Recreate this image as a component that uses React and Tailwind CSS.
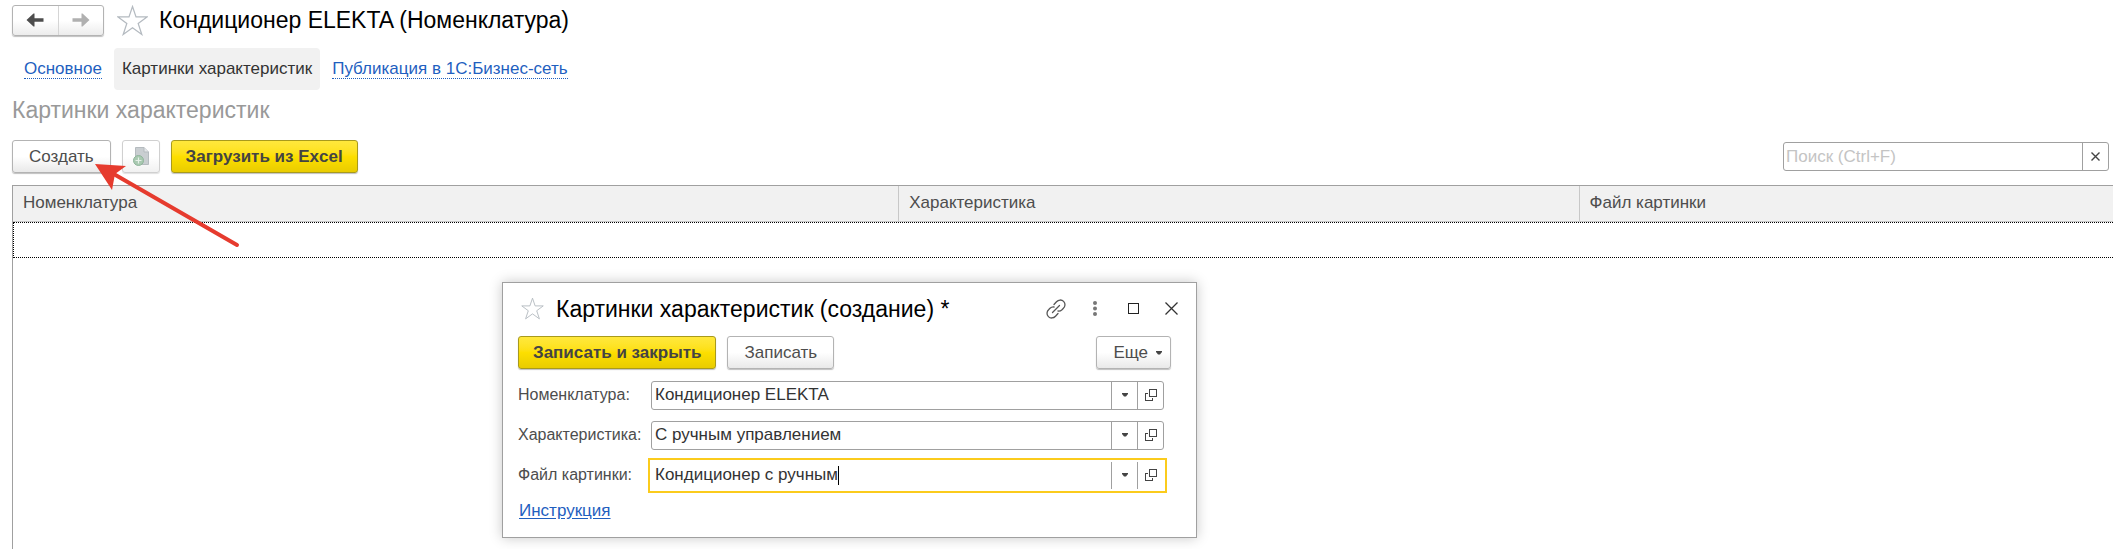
import React from 'react';

const yellowButton = 'h-[33px] rounded-[3px] border border-[#a89a1c] bg-gradient-to-b from-[#ffe83c] via-[#fddf00] to-[#e9cc00] px-[14px] text-[17px] leading-5 font-bold text-[#444] shadow-[0_1px_1px_rgba(0,0,0,0.25)]';
const grayButton = 'h-[33px] rounded-[3px] border border-[#b3b3b3] bg-gradient-to-b from-white from-50% to-[#e9e9e9] px-4 text-[17px] leading-5 text-[#4d4d4d] shadow-[0_1px_1px_rgba(0,0,0,0.25)]';
const headCell = 'border-b border-[#c8c8c8] px-[10px] pb-[2px] font-normal';

const tabs = [
    { label: 'Основное', active: false },
    { label: 'Картинки характеристик', active: true },
    { label: 'Публикация в 1С:Бизнес-сеть', active: false },
];

const fields = [
    { id: 'item', label: 'Номенклатура:', value: 'Кондиционер ELEKTA' },
    { id: 'feature', label: 'Характеристика:', value: 'С ручным управлением' },
    { id: 'file', label: 'Файл картинки:', value: 'Кондиционер с ручным', focused: true },
];

const Star = ({ size }) => (
    <svg width={size} height={size} viewBox="0 0 30 30" fill="none" stroke="#b4bac0" strokeWidth="1.2">
        <path d="M15 1.5 18.4 11.6H29L20.5 17.9 24 28.5 15 22 6 28.5 9.5 17.9 1 11.6H11.6Z" />
    </svg>
);

const Arrow = ({ color, flip }) => (
    <svg width="18" height="14" viewBox="0 0 18 14" fill={color} className={flip ? 'rotate-180' : ''}>
        <path d="M0.5 7 7.5 0.5H8.5V5.3H17.5V8.7H8.5V13.5H7.5Z" />
    </svg>
);

const Caret = () => (
    <svg width="6" height="4" viewBox="0 0 6 4" fill="#444">
        <path d="M0 0H6V1L4 3.5H2L0 1Z" />
    </svg>
);

const OpenIcon = () => (
    <svg width="12" height="12" viewBox="0 0 12 12" fill="none" stroke="#444" shapeRendering="crispEdges">
        <path d="M4.5 0.5H11.5V7.5H4.5ZM3 4.5H0.5V11.5H7.5V9" />
    </svg>
);

const Field = ({ field }) => (
    <div className="flex h-10 items-center">
        <label htmlFor={field.id} className="w-[133px] shrink-0 text-[16px] text-[#4d4d4d]">{field.label}</label>
        <div
            className={field.focused
                ? '-ml-[3px] mr-[14px] flex h-[35px] flex-1 border-2 border-[#fbcb1c] p-[2px]'
                : 'mr-[17px] flex h-[29px] flex-1 rounded-[3px] border border-[#a0a0a0]'}
        >
            <div className="relative flex min-w-0 flex-1">
                <input
                    id={field.id}
                    defaultValue={field.value}
                    className="min-w-0 flex-1 pl-[3px] text-[#333] caret-transparent outline-none"
                />
                {/* Text cursor after the value */}
                {field.focused && (
                    <span aria-hidden="true" className="pointer-events-none absolute inset-y-1 left-0 border-r border-black pl-[3px] text-transparent">
                        {field.value}
                    </span>
                )}
            </div>
            <button aria-label="Выбрать" className="flex w-[26px] items-center justify-center border-l border-[#a0a0a0]">
                <Caret />
            </button>
            <button aria-label="Открыть" className="flex w-[26px] items-center justify-center border-l border-[#a0a0a0]">
                <OpenIcon />
            </button>
        </div>
    </div>
);

const CreateDialog = () => (
    <section className="absolute top-[282px] left-[502px] w-[695px] border border-[#a0a0a0] bg-white px-[15px] pb-4 shadow-[0_0_12px_rgba(0,0,0,0.22)]">
        <header className="flex h-[53px] items-center pb-[2px]">
            <button aria-label="В избранное" className="ml-[3px]">
                <Star size={23} />
            </button>
            <h2 className="ml-3 flex-1 text-[23px] leading-7 text-black">Картинки характеристик (создание) *</h2>
            <div className="flex items-center pr-[3px]">
                <button aria-label="Ссылка" className="mr-[27px]">
                    <svg width="20" height="20" viewBox="0 0 20 20" fill="none" stroke="#555" strokeWidth="1.3" strokeLinecap="round">
                        <path d="M6.5 13.5 13.5 6.5" />
                        <path d="M8 5.5 10.5 2.8C12.5 0.7 15.5 0.3 17.6 2.4C19.7 4.5 19.3 7.5 17.2 9.5L16 10.7C14.8 11.8 13.5 12.3 12 12" />
                        <path d="M12 14.5 9.5 17.2C7.5 19.3 4.5 19.7 2.4 17.6C0.3 15.5 0.7 12.5 2.8 10.5L4 9.3C5.2 8.2 6.5 7.7 8 8" />
                    </svg>
                </button>
                <button aria-label="Меню" className="mr-[31px]">
                    <svg width="4" height="15" viewBox="0 0 4 15" fill="#777">
                        <circle cx="2" cy="2" r="2" />
                        <circle cx="2" cy="7.5" r="2" />
                        <circle cx="2" cy="13" r="2" />
                    </svg>
                </button>
                <button aria-label="Развернуть" className="mr-[26px] size-[11px] border border-[#222]"></button>
                <button aria-label="Закрыть">
                    <svg width="13" height="13" viewBox="0 0 13 13" stroke="#333" strokeWidth="1.3">
                        <path d="M0.5 0.5 12.5 12.5M12.5 0.5 0.5 12.5" />
                    </svg>
                </button>
            </div>
        </header>

        <div className="mb-[6px] flex gap-[11px] pr-[10px]">
            <button className={yellowButton}>Записать и закрыть</button>
            <button className={grayButton}>Записать</button>
            <button className={`${grayButton} ml-auto flex items-center gap-2 pr-2`}>
                Еще <Caret />
            </button>
        </div>

        {fields.map((field) => (
            <Field key={field.id} field={field} />
        ))}

        <div className="mt-[6px] ml-px">
            <a href="#help" className="text-[#1f5fbf] underline underline-offset-2">Инструкция</a>
        </div>
    </section>
);

const App = () => {
    return (
        <div className="relative flex min-h-screen flex-col overflow-hidden bg-white font-['Liberation_Sans',Arial,sans-serif] text-[17px] leading-5">
            {/* Title */}
            <header className="flex h-10 items-center pl-3">
                <div className="flex h-[31px] w-[92px] rounded-[3px] border border-[#b3b3b3] bg-gradient-to-b from-white from-50% to-[#ececec] shadow-[0_1px_1px_rgba(0,0,0,0.25)]">
                    <button aria-label="Назад" className="flex flex-1 items-center justify-center border-r border-[#d5d5d5]">
                        <Arrow color="#4d4d4d" />
                    </button>
                    <button aria-label="Вперед" className="flex flex-1 items-center justify-center">
                        <Arrow color="#b0b0b0" flip />
                    </button>
                </div>
                <button aria-label="В избранное" className="ml-[13px]">
                    <Star size={31} />
                </button>
                <h1 className="ml-[11px] text-[23px] leading-7 text-black">Кондиционер ELEKTA (Номенклатура)</h1>
            </header>

            <nav className="mt-2 flex h-[42px] items-center gap-3 pl-6">
                {tabs.map((tab) => (
                    <a
                        key={tab.label}
                        href="#tab"
                        className={tab.active
                            ? 'flex h-full items-center rounded-[4px] bg-[#f1f1f1] px-2 text-[#333]'
                            : 'border-b border-dotted border-[#1f5fbf] leading-[18px] text-[#1f5fbf]'}
                    >
                        {tab.label}
                    </a>
                ))}
            </nav>

            <h2 className="mt-[6px] pl-3 text-[23px] leading-7 text-[#999]">Картинки характеристик</h2>

            {/* Toolbar */}
            <div className="mt-4 flex items-center pr-1 pl-3">
                <button className={grayButton}>Создать</button>
                <button aria-label="Создать копированием" className="ml-[11px] flex h-[33px] w-[38px] items-center justify-center rounded-[3px] border border-[#d0d0d0] bg-gradient-to-b from-white from-50% to-[#f1f1f1] shadow-[0_1px_1px_rgba(0,0,0,0.12)]">
                    <svg width="16" height="19" viewBox="0 0 16 19">
                        <path d="M2.5 0.5H11L15.5 5V17.5H2.5Z" fill="#c9ced1" stroke="#b5bbbf" />
                        <path d="M11 0.5V5H15.5" fill="#e3e6e8" stroke="#b5bbbf" />
                        <circle cx="5.5" cy="13.5" r="5" fill="#a9c9b1" stroke="#8fb59a" />
                        <path d="M5.5 10.5V16.5M2.5 13.5H8.5" stroke="#e6f0e8" strokeWidth="1.2" />
                    </svg>
                </button>
                <button className={`${yellowButton} ml-[11px]`}>Загрузить из Excel</button>
                <div className="ml-auto flex h-[29px] w-[326px] rounded-[3px] border border-[#a0a0a0]">
                    <input aria-label="Поиск" placeholder="Поиск (Ctrl+F)" className="min-w-0 flex-1 pl-[2px] outline-none placeholder:text-[#c4c4c4]" />
                    <button aria-label="Очистить" className="flex w-[26px] items-center justify-center border-l border-[#a0a0a0]">
                        <svg width="9" height="9" viewBox="0 0 9 9" stroke="#444" strokeWidth="1.4">
                            <path d="M0.5 0.5 8.5 8.5M8.5 0.5 0.5 8.5" />
                        </svg>
                    </button>
                </div>
            </div>

            {/* List */}
            <div className="mt-3 ml-3 flex-1 border-t border-l border-[#a0a0a0]">
                <table className="w-full table-fixed border-separate border-spacing-0">
                    <thead>
                        <tr className="h-9 bg-[#f1f1f1] text-left text-[#4d4d4d]">
                            <th className={`${headCell} w-[42.2%] border-r`}>Номенклатура</th>
                            <th className={`${headCell} w-[32.4%] border-r`}>Характеристика</th>
                            <th className={headCell}>Файл картинки</th>
                        </tr>
                    </thead>
                    <tbody>
                        <tr className="h-9">
                            <td colSpan={3} className="border-y border-l border-dotted border-black"></td>
                        </tr>
                    </tbody>
                </table>
            </div>

            {/* Pointer to the create button */}
            <svg className="pointer-events-none absolute top-[160px] left-[92px]" width="150" height="90" viewBox="0 0 150 90">
                <path d="M20 13 145 85" stroke="#e63b2e" strokeWidth="4" strokeLinecap="round" />
                <path d="M3 4 34 6 23 14 20 30Z" fill="#e63b2e" />
            </svg>

            <CreateDialog />
        </div>
    );
};

export default App;
